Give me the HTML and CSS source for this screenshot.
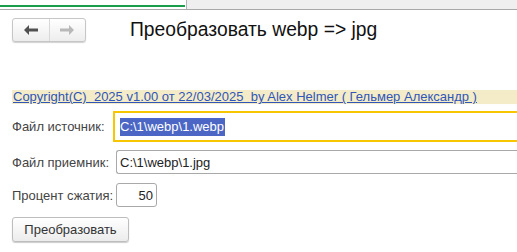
FILE: index.html
```html
<!DOCTYPE html>
<html lang="ru">
<head>
<meta charset="utf-8">
<link rel="stylesheet" href="styles.css">
</head>
<body>
<div class="topbar">
  <div class="top-left"><div class="green"></div></div>
  <div class="top-right"></div>
</div>
<div class="header">
  <div class="nav">
    <div class="nav-btn">
      <svg width="14" height="10" viewBox="0 0 14 10"><path d="M0 5 L5 0 L5 3.5 L14 3.5 L14 6.5 L5 6.5 L5 10 Z" fill="#505050"/></svg>
    </div>
    <div class="nav-btn">
      <svg width="14" height="10" viewBox="0 0 14 10"><path d="M14 5 L9 0 L9 3.5 L0 3.5 L0 6.5 L9 6.5 L9 10 Z" fill="#b8b8b8"/></svg>
    </div>
  </div>
  <div class="title">Преобразовать webp =&gt; jpg</div>
</div>
<div class="copyright"><span class="link">Copyright(C)&nbsp; 2025 v1.00 от 22/03/2025&nbsp; by Alex Helmer ( Гельмер Александр )</span></div>
<div class="form">
  <div class="row row-src">
    <div class="label">Файл источник:</div>
    <div class="field field-active"><span class="sel">C:\1\webp\1.webp</span></div>
  </div>
  <div class="row row-dst">
    <div class="label">Файл приемник:</div>
    <div class="field">C:\1\webp\1.jpg</div>
  </div>
  <div class="row row-pct">
    <div class="label">Процент сжатия:</div>
    <div class="field field-num">50</div>
  </div>
  <div class="actions">
    <div class="button">Преобразовать</div>
  </div>
</div>
</body>
</html>
```
FILE: styles.css
```css
html, body {
  margin: 0;
  padding: 0;
  background: #fff;
  width: 517px;
  height: 252px;
  overflow: hidden;
  font-family: "Liberation Sans", Arial, sans-serif;
}
.topbar {
  display: flex;
  height: 9px;
  border-bottom: 1px solid #a8a8a8;
}
.top-left {
  width: 187px;
  padding-top: 5px;
  box-sizing: border-box;
  border-right: 1px solid #b5b5b5;
  padding-right: 1px;
}
.green {
  height: 2px;
  background: #1a9c4a;
}
.top-right {
  flex: 1;
  background: #efefef;
}
.header {
  display: flex;
  align-items: center;
  padding-left: 12px;
  margin-top: 8px;
  height: 24px;
}
.nav {
  display: flex;
  width: 74px;
  height: 24px;
  box-sizing: border-box;
  border: 1px solid #c6c6c6;
  border-radius: 3px;
  background: linear-gradient(#ffffff, #ededed);
  box-shadow: 0 1px 1px rgba(0,0,0,0.18);
}
.nav-btn {
  flex: 1;
  display: flex;
  align-items: center;
  justify-content: center;
}
.nav-btn + .nav-btn {
  border-left: 1px solid #d8d8d8;
}
.title {
  margin-left: 44px;
  font-size: 19.3px;
  color: #111;
  line-height: 24px;
  margin-top: -1px;
}
.copyright {
  margin: 48px 0 0 12px;
  height: 14px;
  background: #f4ebc8;
  font-size: 13px;
  line-height: 14px;
  padding-left: 1px;
  white-space: nowrap;
  overflow: hidden;
}
.link {
  color: #2f56b8;
  text-decoration: underline;
}
.form {
  padding-left: 12px;
  display: flex;
  flex-direction: column;
}
.row {
  display: flex;
  align-items: center;
}
.label {
  font-size: 13px;
  color: #444;
  width: 104px;
  white-space: nowrap;
}
.field {
  flex: 1;
  box-sizing: border-box;
  border: 1px solid #a9a9a9;
  border-radius: 3px 0 0 3px;
  border-right: none;
  font-size: 13px;
  color: #222;
  display: flex;
  align-items: center;
  padding-left: 3px;
}
.row-src {
  margin-top: 7px;
}
.row-src .label {
  width: 101px;
}
.field-active {
  height: 31px;
  border: 2px solid #f7c600;
  border-right: none;
  border-radius: 0;
  padding-left: 5px;
}
.sel {
  background: #4b66c4;
  color: #fff;
  line-height: 18px;
  padding-right: 1px;
}
.row-dst {
  margin-top: 8px;
}
.row-dst .field {
  height: 24px;
}
.row-pct {
  margin-top: 9px;
}
.field-num {
  flex: none;
  width: 41px;
  height: 24px;
  border-right: 1px solid #a9a9a9;
  border-radius: 3px;
  justify-content: flex-end;
  padding-right: 3px;
}
.actions {
  margin-top: 10px;
  display: flex;
}
.button {
  width: 117px;
  height: 25px;
  box-sizing: border-box;
  border: 1px solid #bdbdbd;
  border-radius: 3px;
  background: linear-gradient(#ffffff, #ececec);
  box-shadow: 0 1px 1px rgba(0,0,0,0.2);
  font-size: 13px;
  color: #333;
  display: flex;
  align-items: center;
  justify-content: center;
}
```
